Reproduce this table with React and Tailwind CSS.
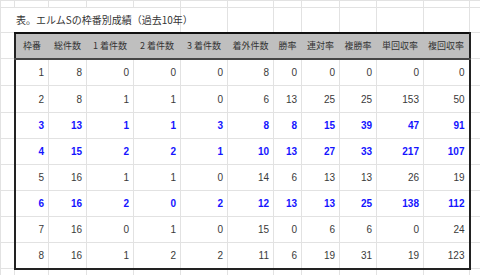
import React from 'react';

const headers = ['枠番', '総件数', '1 着件数', '2 着件数', '3 着件数', '着外件数', '勝率', '連対率', '複勝率', '単回収率', '複回収率'];

const rows = [
  { v: [1, 8, 0, 0, 0, 8, 0, 0, 0, 0, 0] },
  { v: [2, 8, 1, 1, 0, 6, 13, 25, 25, 153, 50] },
  { v: [3, 13, 1, 1, 3, 8, 8, 15, 39, 47, 91], hot: true },
  { v: [4, 15, 2, 2, 1, 10, 13, 27, 33, 217, 107], hot: true },
  { v: [5, 16, 1, 1, 0, 14, 6, 13, 13, 26, 19] },
  { v: [6, 16, 2, 0, 2, 12, 13, 13, 25, 138, 112], hot: true },
  { v: [7, 16, 0, 1, 0, 15, 0, 6, 6, 0, 24] },
  { v: [8, 16, 1, 2, 2, 11, 6, 19, 31, 19, 123] },
];

const rowHeights = ['h-[27px]', 'h-[27px]', 'h-[26px]', 'h-[26px]', 'h-[26px]', 'h-[26px]', 'h-[26px]', 'h-[26px]'];

const grid = 'border border-[#e2e2e2] p-0';

const EmptyRow = ({ h }) => (
  <tr className={h}>
    {Array.from({ length: 13 }).map((_, i) => (
      <td key={i} className={grid} />
    ))}
  </tr>
);

export default function App() {
  return (
    <div className="w-[480px] h-[275px] overflow-hidden bg-white">
      <table className="table-fixed border-collapse w-[509px] font-['Liberation_Sans',sans-serif]">
        <colgroup>
          <col className="w-[14px]" />
          <col className="w-[34px]" />
          <col className="w-[38px]" />
          <col className="w-[47px]" />
          <col className="w-[47px]" />
          <col className="w-[47px]" />
          <col className="w-[46px]" />
          <col className="w-[28px]" />
          <col className="w-[38px]" />
          <col className="w-[37px]" />
          <col className="w-[47px]" />
          <col className="w-[46px]" />
          <col className="w-[40px]" />
        </colgroup>
        <tbody>
          <EmptyRow h="h-[7px]" />
          <tr className="h-[25px]">
            <td colSpan={5} className={`${grid} border-r-0 pl-[15px] whitespace-nowrap overflow-visible text-[10px] text-[#333] font-['Noto_Sans_CJK_JP',sans-serif]`}>
              表。エルムSの枠番別成績（過去10年）
            </td>
            {Array.from({ length: 8 }).map((_, i) => (
              <td key={i} className={grid} />
            ))}
          </tr>
          <tr className="h-[26px]">
            <td className={grid} />
            {headers.map((h, i) => (
              <td
                key={h}
                className={`p-0 bg-[#bfbfbf] text-center whitespace-nowrap text-[9px] text-[#333] font-['Noto_Sans_CJK_JP',sans-serif] border-t-2 border-t-[#111] border-b-2 border-b-[#454545] ${
                  i === 0 ? 'border-l-2 border-l-[#222]' : ''
                } ${i === headers.length - 1 ? 'border-r-2 border-r-[#222]' : ''}`}
              >
                {h}
              </td>
            ))}
            <td className={grid} />
          </tr>
          {rows.map((r, ri) => (
            <tr key={ri} className={rowHeights[ri]}>
              <td className={grid} />
              {r.v.map((n, i) => (
                <td
                  key={i}
                  className={`${grid} pr-[4px] text-right text-[10px] ${
                    r.hot ? 'font-bold text-[#1414ff]' : 'text-[#3a3a3a]'
                  } ${i === 0 ? 'border-l-2 border-l-[#222]' : ''} ${
                    i === r.v.length - 1 ? 'border-r-2 border-r-[#222]' : ''
                  } ${ri === rows.length - 1 ? 'border-b-2 border-b-[#222]' : ''}`}
                >
                  {n}
                </td>
              ))}
              <td className={grid} />
            </tr>
          ))}
          <EmptyRow h="h-[20px]" />
        </tbody>
      </table>
    </div>
  );
}
